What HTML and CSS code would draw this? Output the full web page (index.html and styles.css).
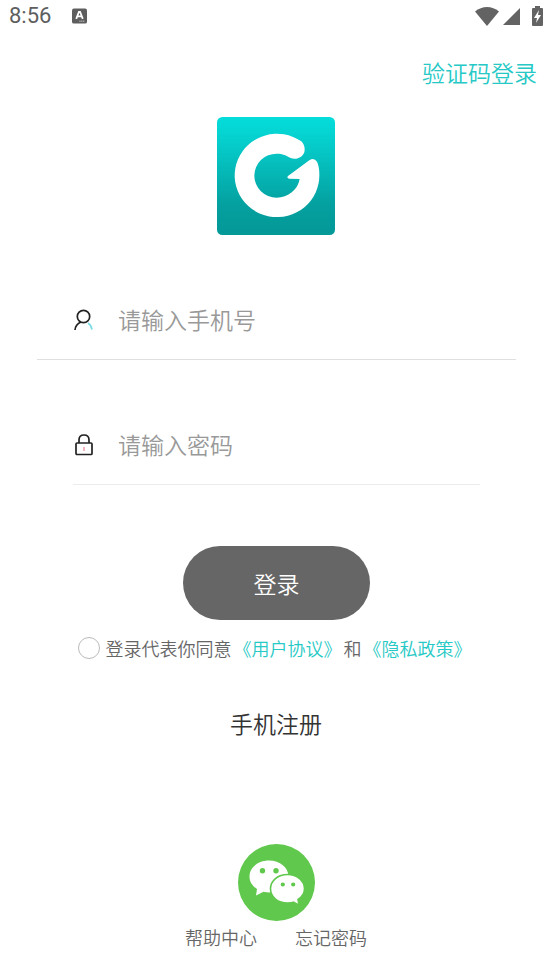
FILE: index.html
```html
<!DOCTYPE html>
<html lang="zh-CN">
<head>
<meta charset="utf-8">
<meta name="viewport" content="width=device-width, initial-scale=1">
<title>登录</title>
<link rel="stylesheet" href="styles.css">
</head>
<body>
<header class="status">
  <span class="clock">8:56</span>
  <svg class="status-app" viewBox="0 0 16 16" aria-hidden="true"><rect width="16" height="16" rx="2" fill="#5e5e5e"/><path d="M4.500 11 7.400 3.500h1.200L11.500 11M5.500 8.500h5" fill="none" stroke="#fff" stroke-width="1.900"/><path d="M8 13.500h1m1 0h1m1 0h1" stroke="#fff"/></svg>
  <div class="status-icons">
    <svg width="24" height="19" viewBox="0 0 24 19" aria-hidden="true"><path d="M0 4.500C7-1.500 17-1.500 24 4.500L12 19Z" fill="#636363"/></svg>
    <svg width="17" height="17" viewBox="0 0 17 17" aria-hidden="true"><path d="M17 0v17H0Z" fill="#636363"/></svg>
    <svg width="11" height="20" viewBox="0 0 11 20" aria-hidden="true"><path d="M3 0h5v2h2q1 0 1 1v16q0 1-1 1H1q-1 0-1-1V3q0-1 1-1h2Z" fill="#636363"/><path d="M7 4 2 12h3l-1 5 5-8H6Z" fill="#fff"/></svg>
  </div>
</header>
<nav class="top"><a href="#code">验证码登录</a></nav>
<main>
  <svg class="logo" viewBox="37 36 354 354" role="img" aria-label="G">
    <defs><linearGradient id="teal" x1="0" y1="0" x2="0" y2="1"><stop offset="0" stop-color="#04dddb"/><stop offset=".15" stop-color="#05d3d1"/><stop offset=".75" stop-color="#04a09f"/><stop offset="1" stop-color="#049897"/></linearGradient></defs>
    <rect x="37" y="36" width="354" height="354" rx="16" fill="url(#teal)"/>
    <path d="M290 109A127 125 0 1 0 344 208Q344 184 337 170Q328 157 314 166L250 213Q245 219 253 221L285 222C280 254 250 278 216 278A67 66 0 1 1 216 146C235 146 245 152 256 158C272 166 292 160 299 142Q303 122 290 109Z" fill="#fff"/>
  </svg>
  <form class="form">
    <div class="field">
      <label for="phone" aria-label="手机号"><svg width="20" height="22" viewBox="0 0 20 22" fill="none" aria-hidden="true"><circle cx="9.500" cy="7.500" r="6.200" stroke="#222" stroke-width="1.700"/><path d="M7 13C3.500 14.500 1.300 17 1 21" stroke="#222" stroke-width="1.700"/><path d="M14 14C16.500 15.500 17.500 18 18 20.500" stroke="#7bdce6" stroke-width="1.700"/></svg></label>
      <input id="phone" type="tel" placeholder="请输入手机号">
    </div>
    <div class="field field-inset">
      <label for="password" aria-label="密码"><svg width="20" height="22" viewBox="0 0 20 22" fill="none" aria-hidden="true"><rect x="2" y="9" width="16" height="11.500" rx="1" stroke="#222" stroke-width="1.700"/><path d="M5 9V6Q5 1 10 1T15 6V9" stroke="#222" stroke-width="1.700"/><path d="M10 13v4" stroke="#ee8b9b" stroke-width="1.300"/></svg></label>
      <input id="password" type="password" placeholder="请输入密码">
    </div>
    <button class="submit" type="submit">登录</button>
    <div class="agree">
      <input id="agree" type="checkbox">
      <label for="agree">登录代表你同意</label><a href="#terms">《用户协议》</a><span>和</span><a href="#privacy">《隐私政策》</a>
    </div>
  </form>
  <a class="register" href="#register">手机注册</a>
  <button class="wechat" type="button" aria-label="微信登录">
    <svg viewBox="0 0 77 77" aria-hidden="true"><circle cx="38.500" cy="38.500" r="38.500" fill="#60c84c"/><path d="M31 16.500C20 16.500 11.500 23.500 11.500 32.500C11.500 38 14.500 42 19 45L18 51.500L25.500 47.800Q28 48.500 32 48.500C42 48.500 50.500 41.500 50.500 32.500S42 16.500 31 16.500Z" fill="#fff"/><path d="M49.500 30.500C40 30.500 32.500 36.500 32.500 44.800S40 59 49.500 59Q53 59 55.500 58.200L61 61.200L60 55.500C64 53 66.500 49.500 66.500 44.800C66.500 36.500 59 30.500 49.500 30.500Z" fill="#fff" stroke="#60c84c" stroke-width="1.600"/><g fill="#60c84c"><circle cx="24.500" cy="26.800" r="2.700"/><circle cx="38" cy="26.800" r="2.700"/><circle cx="44.800" cy="40.500" r="2.100"/><circle cx="55.200" cy="40.500" r="2.100"/></g></svg>
  </button>
</main>
<footer class="links"><a href="#help">帮助中心</a><a href="#forgot">忘记密码</a></footer>
</body>
</html>
```
FILE: styles.css
```css
* { box-sizing: border-box; }
body {
  margin: 0;
  background: #fff;
  color: #666;
  font-family: "Noto Sans CJK SC", sans-serif;
  font-size: 18px;
  font-weight: 350;
  line-height: 28px;
}
a { color: inherit; text-decoration: none; }
svg { display: block; }
button { border: 0; padding: 0; cursor: pointer; }

.status {
  display: flex;
  align-items: center;
  height: 32px;
  padding: 0 9px;
}
.clock { font-family: Roboto, sans-serif; font-size: 22px; font-weight: 400; color: #5e5e5e; }
.status-app { width: 15px; height: 16px; margin-left: 21px; }
.status-icons { display: flex; align-items: center; gap: 4px; margin-left: auto; }
.status-icons svg:last-child { margin-left: 8px; }

.top { padding: 23px 15px 0; text-align: right; font-size: 23px; line-height: 34px; }
.top a, .agree a { color: #26c9c5; }

main { display: flex; flex-direction: column; align-items: center; }
.logo { width: 118px; height: 118px; margin-top: 28px; }

.form {
  display: flex;
  flex-direction: column;
  align-items: center;
  width: 100%;
  padding: 0 36px 0 37px;
  margin-top: 46px;
}
.field {
  display: flex;
  align-items: center;
  gap: 24px;
  width: 100%;
  height: 79px;
  padding-left: 37px;
  border-bottom: 1px solid #e0e0e0;
}
.field-inset {
  width: calc(100% - 72px);
  margin-top: 46px;
  padding-left: 1px;
  border-color: #ececec;
}
.field input {
  flex: 1;
  min-width: 0;
  padding: 0 0 2px;
  border: 0;
  outline: 0;
  background: none;
  color: #333;
  font: inherit;
  font-size: 23px;
  line-height: 34px;
}
.field input::placeholder { color: #999; opacity: 1; }

.submit {
  width: 187px;
  height: 74px;
  margin-top: 61px;
  border-radius: 37px;
  background: #666;
  color: #fff;
  font: inherit;
  font-size: 23px;
}
.agree { display: flex; align-items: center; gap: 2px; margin-top: 14px; padding-right: 4px; white-space: nowrap; }
.agree input {
  appearance: none;
  width: 22px;
  height: 22px;
  margin: 0 4px 0 0;
  border: 1px solid #bbb;
  border-radius: 50%;
}
.register { margin-top: 44px; color: #333; font-size: 23px; line-height: 34px; }
.wechat { width: 77px; height: 77px; margin-top: 104px; border-radius: 50%; background: none; }
.links { display: flex; justify-content: center; gap: 38px; margin-top: 2px; }
```
